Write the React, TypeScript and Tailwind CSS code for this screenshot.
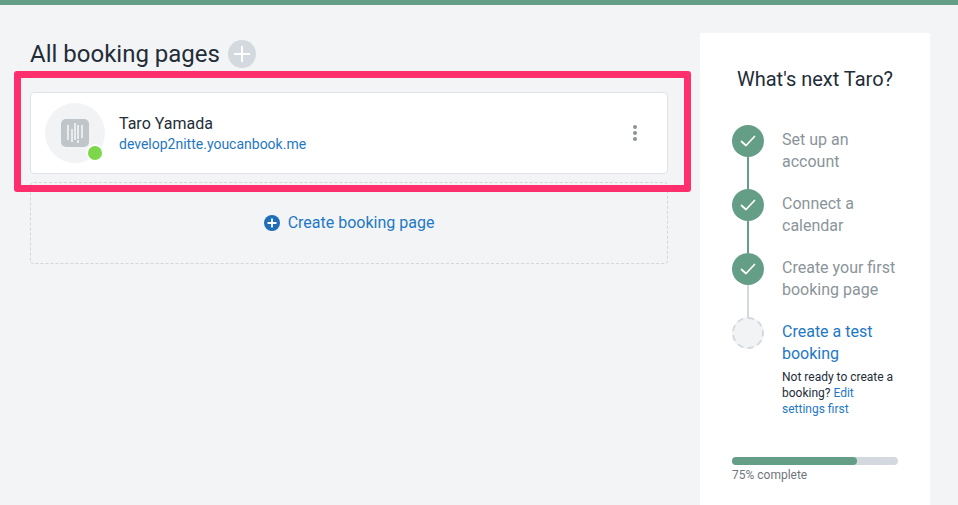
import React from "react";

const Check = () => (
  <svg width="16" height="16" viewBox="0 0 16 16" fill="none" stroke="#fff" strokeWidth="1.7" strokeLinecap="round" strokeLinejoin="round">
    <path d="M1.5 8.5 L6 12.5 L14.5 3.5" />
  </svg>
);

const Done = ({ a, b, lineColor }: { a: string; b: string; lineColor: string }) => (
  <div className="flex h-16">
    <div className="w-8 shrink-0 flex flex-col items-center">
      <div className="w-8 h-8 rounded-full bg-[#659e86] flex items-center justify-center shrink-0"><Check /></div>
      <div className={`w-0.5 flex-1 ${lineColor}`} />
    </div>
    <div className="ml-[18px] pt-1 text-base leading-[22px] text-[#8b949b] whitespace-nowrap">
      <div>{a}</div>
      <div>{b}</div>
    </div>
  </div>
);

export default function App() {
  return (
    <div className="relative w-[958px] h-[505px] overflow-hidden bg-[#f3f4f6] font-['Roboto',sans-serif]">
      <div className="h-[5px] bg-[#659e86]" />
      <div className="flex pl-[30px] pt-7">
        <main className="w-[638px] pt-[3px]">
          <div className="flex items-center h-7 mt-1">
            <h1 className="text-[24px] leading-7 text-[#232d38]">All booking pages</h1>
            <div className="ml-2 w-7 h-7 rounded-full bg-[#d3d9de] flex items-center justify-center">
              <svg width="16" height="16" viewBox="0 0 16 16" stroke="#fff" strokeWidth="2"><path d="M8 0V16M0 8H16" /></svg>
            </div>
          </div>
          <div className="mt-6 h-[82px] bg-white border border-[#dfe3e8] rounded flex items-center pl-[14px] pr-[30px]">
            <div className="relative w-[60px] h-[60px] rounded-full bg-[#f2f3f5] flex items-center justify-center">
              <div className="w-7 h-7 rounded-[5px] bg-[#c0c5ca]">
                <svg width="28" height="28" viewBox="0 0 28 28" fill="#e9ebed">
                  <rect x="6" y="6" width="2" height="15" />
                  <rect x="10" y="10" width="2" height="13" />
                  <rect x="13" y="4" width="2" height="17" />
                  <rect x="16" y="6" width="2" height="14" />
                  <rect x="16" y="21" width="2" height="3" />
                  <rect x="20" y="6" width="2" height="13" />
                </svg>
              </div>
              <div className="absolute left-[41px] top-[41px] w-[14px] h-[14px] rounded-full bg-[#7cd84a] border-2 border-white box-content" />
            </div>
            <div className="ml-[14px] flex-1">
              <div className="text-base leading-[22px] text-[#232d38]">Taro Yamada</div>
              <div className="text-sm leading-[18px] text-[#1f78c4]">develop2nitte.youcanbook.me</div>
            </div>
            <div className="flex flex-col gap-0.5">
              <span className="w-1 h-1 rounded-full bg-[#8b949b]" />
              <span className="w-1 h-1 rounded-full bg-[#8b949b]" />
              <span className="w-1 h-1 rounded-full bg-[#8b949b]" />
            </div>
          </div>
          <div className="mt-2 h-[82px] border border-dashed border-[#d3d7da] rounded-sm flex items-center justify-center">
            <span className="w-4 h-4 rounded-full bg-[#1f6fb8] flex items-center justify-center mr-2">
              <svg width="10" height="10" viewBox="0 0 10 10" stroke="#fff" strokeWidth="1.8"><path d="M5 0.5V9.5M0.5 5H9.5" /></svg>
            </span>
            <span className="text-base text-[#1f78c4]">Create booking page</span>
          </div>
        </main>
        <aside className="ml-8 w-[230px] h-[472px] bg-white px-8">
          <h2 className="mt-8 text-[20px] leading-7 text-[#232d38] text-center whitespace-nowrap">What's next Taro?</h2>
          <div className="mt-8">
            <Done a="Set up an" b="account" lineColor="bg-[#659e86]" />
            <Done a="Connect a" b="calendar" lineColor="bg-[#659e86]" />
            <Done a="Create your first" b="booking page" lineColor="bg-[#d3d9de]" />
            <div className="flex">
              <div className="w-8 h-8 shrink-0 rounded-full bg-[#f2f3f5] border-2 border-dashed border-[#d3d9de]" />
              <div className="ml-[18px] pt-1 w-[120px]">
                <div className="text-base leading-[22px] text-[#1f78c4]">Create a test<br />booking</div>
                <p className="mt-1 text-xs leading-4 text-[#232d38] whitespace-nowrap">
                  Not ready to create a<br />booking? <span className="text-[#1f78c4]">Edit<br />settings first</span>
                </p>
              </div>
            </div>
          </div>
          <div className="mt-10 h-2 rounded bg-[#d3d9de] w-[166px]">
            <div className="h-2 rounded bg-[#659e86] w-3/4" />
          </div>
          <div className="mt-[2px] text-xs leading-4 text-[#6f777d]">75% complete</div>
        </aside>
      </div>
      <div className="absolute left-[14px] top-[71px] w-[677px] h-[121px] border-[7px] border-[#ff2f6d] rounded-[3px]" />
    </div>
  );
}
